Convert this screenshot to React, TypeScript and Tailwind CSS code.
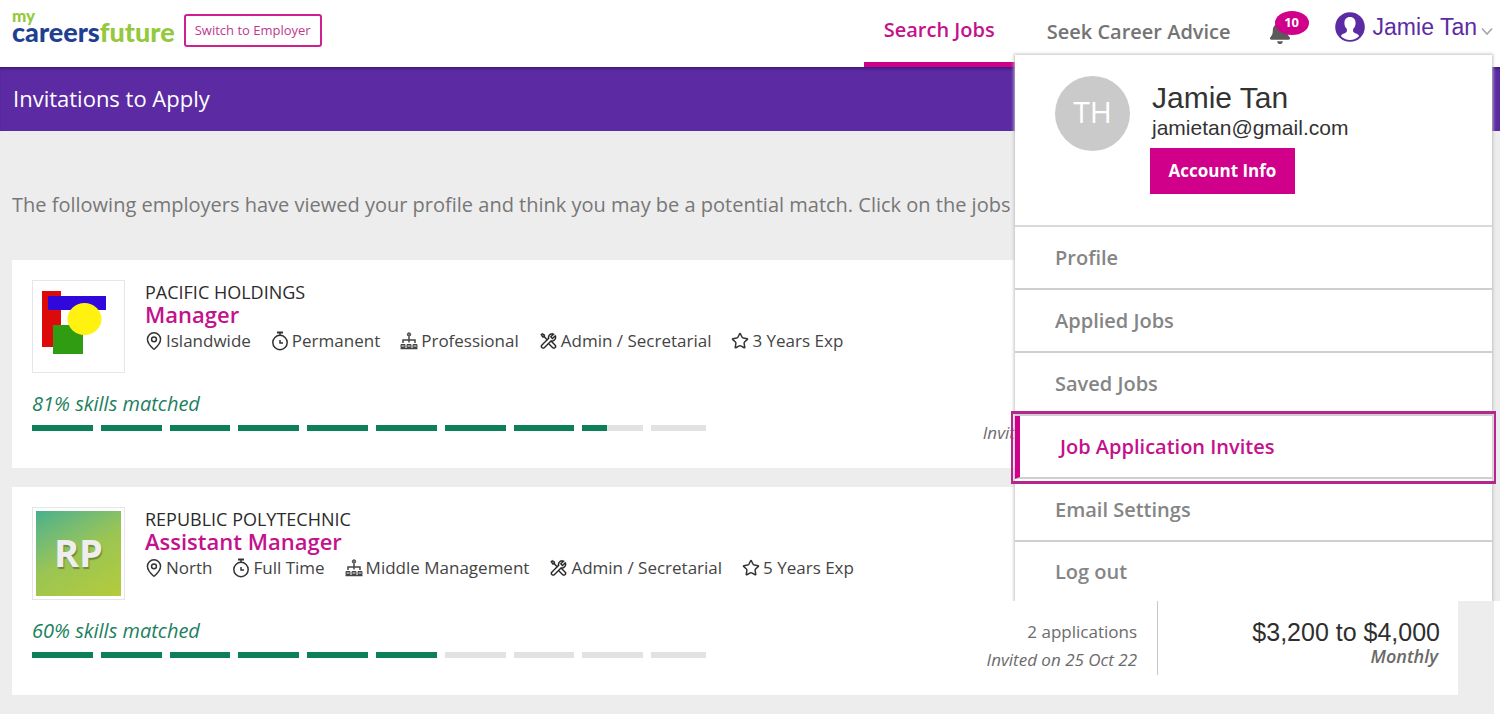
import React from 'react';
import { MapPin, Star } from 'lucide-react';
import { FaBell } from 'react-icons/fa';
import { LiaToolsSolid } from 'react-icons/lia';

interface Job {
  company: string;
  title: string;
  location: string;
  type: string;
  level: string;
  category: string;
  experience: string;
  match: number;
  // how far each of the ten segments is filled
  segments: number[];
  applications: string;
  invited: string;
  salary: string;
  logo: React.ReactNode;
}

const ShapesLogo = () => (
  <svg viewBox="0 0 84 84" className="h-[84px] w-[84px]" aria-hidden="true">
    <rect x="5" y="6" width="19" height="56" fill="#dc0a0a" />
    <rect x="11" y="11" width="58" height="14" fill="#3108dc" />
    <rect x="16" y="40" width="30" height="29" fill="#309c12" />
    <ellipse cx="47.500" cy="34" rx="17" ry="16" fill="#fff110" />
  </svg>
);

const PolyLogo = () => (
  <div className="flex h-[85px] w-[85px] items-center justify-center bg-linear-150 from-[#45b08c] via-[#9ac552] via-50% to-[#b4cb3a] pb-1">
    <span className="text-[38px] font-bold leading-none text-[#eeeeee] [text-shadow:1px_2px_1px_#6f8a3c]">RP</span>
  </div>
);

const StopwatchIcon = () => (
  <svg viewBox="0 0 18 20" className="h-5 w-[18px]" fill="none" stroke="#333" strokeWidth="1.500" aria-hidden="true">
    <circle cx="9" cy="11.500" r="7.200" />
    <path d="M6 1.500h6" strokeWidth="2" />
    <path d="M9 1.500v3M9 9v3h3" />
  </svg>
);

const SitemapIcon = () => (
  <svg viewBox="0 0 18 18" className="h-[18px] w-[18px]" fill="none" stroke="#444" aria-hidden="true">
    <circle cx="9" cy="2.500" r="1.700" fill="#777" />
    <path d="M9 4.500v6M3 11V8h12v3" strokeWidth="1.500" />
    <path d="M1 12.500h4v3H1zM7 12.500h4v3H7zM13 12.500h4v3h-4z" fill="#999" />
    <path d="M.5 16.500h17" strokeWidth="1.500" />
  </svg>
);

const UserIcon = () => (
  <svg viewBox="0 0 30 30" className="h-[30px] w-[30px]" aria-hidden="true">
    <circle cx="15" cy="15" r="14.800" fill="#5c2ba4" />
    <path
      d="M15 5c-3.600 0-5.600 2.400-5.600 6 0 2.600.9 4.600 2.500 6v2c0 1.500-1.400 1.900-3.600 2.800-1.500.6-2 1.400-2.300 2.500C8.300 26.500 11.500 28 15 28s6.700-1.500 9-3.700c-.3-1.100-.8-1.900-2.300-2.500-2.200-.9-3.600-1.300-3.600-2.800v-2c1.600-1.400 2.500-3.400 2.500-6 0-3.600-2-6-5.600-6z"
      fill="#fff"
    />
  </svg>
);

const Caret = () => (
  <svg viewBox="0 0 12 9" className="mt-2 h-[9px] w-3" fill="none" stroke="#a6a6a6" strokeWidth="1.600" aria-hidden="true">
    <path d="M1 1.500l5 5.500 5-5.500" />
  </svg>
);

const jobs: Job[] = [
  {
    company: 'PACIFIC HOLDINGS',
    title: 'Manager',
    location: 'Islandwide',
    type: 'Permanent',
    level: 'Professional',
    category: 'Admin / Secretarial',
    experience: '3 Years Exp',
    match: 81,
    segments: [100, 100, 100, 100, 100, 100, 100, 100, 40, 0],
    applications: '2 applications',
    invited: 'Invited on 26 Nov 22',
    salary: '$3,200 to $4,000',
    logo: <ShapesLogo />,
  },
  {
    company: 'REPUBLIC POLYTECHNIC',
    title: 'Assistant Manager',
    location: 'North',
    type: 'Full Time',
    level: 'Middle Management',
    category: 'Admin / Secretarial',
    experience: '5 Years Exp',
    match: 60,
    segments: [100, 100, 100, 100, 100, 100, 0, 0, 0, 0],
    applications: '2 applications',
    invited: 'Invited on 25 Oct 22',
    salary: '$3,200 to $4,000',
    logo: <PolyLogo />,
  },
];

const menuItems = ['Profile', 'Applied Jobs', 'Saved Jobs', 'Job Application Invites', 'Email Settings', 'Log out'];

const Meta: React.FC<{ icon: React.ReactNode; label: string }> = ({ icon, label }) => (
  <li className="flex items-center gap-[3px]">
    {icon}
    <span>{label}</span>
  </li>
);

const JobCard: React.FC<{ job: Job }> = ({ job }) => (
  <article className="flex h-[208px] justify-between bg-white pl-5 pr-[18px] pt-5">
    <div>
      <div className="flex gap-5">
        <div className="flex h-[93px] w-[93px] items-center justify-center border border-[#e6e6e6]">{job.logo}</div>
        <div>
          <p className="text-[18px] leading-6 text-[#2b2b2b]">{job.company}</p>
          <h2 className="text-[22px] font-semibold leading-5 text-[#c4118c]">
            <a href="#job">{job.title}</a>
          </h2>
          <ul className="mt-[5px] flex gap-5 text-[17px] leading-6 text-[#444]">
            <Meta
              icon={<MapPin viewBox="3 1 18 22" className="h-[18px] w-[18px] text-[#333]" strokeWidth={1.8} />}
              label={job.location}
            />
            <Meta icon={<StopwatchIcon />} label={job.type} />
            <Meta icon={<SitemapIcon />} label={job.level} />
            <Meta icon={<LiaToolsSolid className="h-5 w-[19px] stroke-[#222] stroke-[0.5] text-[#222]" />} label={job.category} />
            <Meta icon={<Star className="h-[18px] w-[18px] text-[#333]" strokeWidth={2} />} label={job.experience} />
          </ul>
        </div>
      </div>
      <p className="mt-[18px] text-[20px] italic leading-[26px] text-[#1d7f60]">{job.match}% skills matched</p>
      <div className="mt-2 w-[674px] overflow-hidden">
        <div className="flex w-[680px] gap-2">
          {job.segments.map((fill, i) => (
            <div key={i} className="h-[6px] flex-1 bg-[#e2e2e2]">
              <div className="h-full bg-[#0d8058]" style={{ width: `${fill}%` }} />
            </div>
          ))}
        </div>
      </div>
    </div>
    <div className="flex items-end pb-5 text-right">
      <div className="flex h-[168px] flex-col justify-end border-r border-[#c8c8c8] pb-px pr-5 text-[#6b6b6b]">
        <p className="text-[17px] leading-7">{job.applications}</p>
        <p className="text-[17px] italic leading-7">{job.invited}</p>
      </div>
      <div className="w-[282px] pb-[7px]">
        <p className="font-['Liberation_Sans',sans-serif] text-[25px] leading-6 text-[#2e2e2e]">{job.salary}</p>
        <p className="pr-[2px] text-[18px] font-semibold italic leading-6 text-[#6a6a6a]">Monthly</p>
      </div>
    </div>
  </article>
);

const AccountMenu = () => (
  <div className="absolute right-2 top-[55px] z-10 h-[546px] w-[477px] bg-white shadow-[0_0_3px_1px_#c0c0c0] [clip-path:inset(-4px_-4px_0_-4px)]">
    <div className="flex h-[172px] gap-5 border-b-2 border-[#dadada] pl-10 pt-[21px]">
      <div className="flex h-[75px] w-[75px] items-center justify-center rounded-full bg-[#cacaca] pb-1 text-[30px] text-white">
        TH
      </div>
      <div>
        <p className="mt-1 pl-[2px] font-['Liberation_Sans',sans-serif] text-[30px] leading-9 text-[#333]">Jamie Tan</p>
        <p className="pl-[2px] font-['Liberation_Sans',sans-serif] text-[21px] leading-6 text-[#333]">jamietan@gmail.com</p>
        <button className="mt-2 h-[46px] w-[145px] bg-[#d0008a] text-[17px] font-bold text-white">Account Info</button>
      </div>
    </div>
    <nav>
      {menuItems.map((item) =>
        item === 'Job Application Invites' ? (
          <a
            key={item}
            href="#invites"
            className="flex h-[63px] items-center border-b-2 border-l-[5px] border-b-[#cfcfcf] border-l-[#d0008a] pl-10 text-[20px] font-semibold text-[#c4118c] outline-3 outline-offset-2 outline-[#b5278f]"
          >
            {item}
          </a>
        ) : (
          <a
            key={item}
            href="#menu"
            className="flex h-[63px] items-center border-b-2 border-[#cfcfcf] pl-10 text-[20px] font-semibold text-[#858585] last:h-[60px] last:border-b-0"
          >
            {item}
          </a>
        )
      )}
    </nav>
  </div>
);

export default function App() {
  return (
    <div className="relative min-h-screen overflow-hidden bg-[#ededed] font-['Open_Sans','Noto_Sans',sans-serif]">
      <header className="flex h-[67px] bg-white pl-3 pr-[7px]">
        <a href="#home" className="mt-[10px] h-9 font-['Lato',sans-serif] font-black">
          <span className="block text-[17px] leading-[11px] text-[#95c93d]">my</span>
          <span className="block text-[27px] leading-[21px] text-[#1e4091]">
            careers<span className="text-[#95c93d]">future</span>
          </span>
        </a>
        <button className="ml-[9px] mt-[14px] h-[33px] w-[138px] rounded-[3px] border-2 border-[#d0208f] text-[13px] text-[#c0388f]">
          Switch to Employer
        </button>
        <nav className="ml-auto flex text-[20px] font-semibold">
          <a href="#search" className="flex w-[151px] items-center justify-center border-b-[5px] border-[#d0008a] pb-[2px] text-[#c4118c]">
            Search Jobs
          </a>
          <a href="#advice" className="ml-8 flex items-center pb-1 text-[#747474]">
            Seek Career Advice
          </a>
        </nav>
        <button aria-label="Notifications" className="relative ml-[38px] mt-5 h-6 w-6">
          <FaBell className="h-[23px] w-[22px] text-[#5a5a5a]" />
          <span className="absolute -top-[9px] left-[6px] flex h-6 w-[34px] items-center justify-center rounded-[50%] bg-[#d0008a] text-[13px] font-bold text-white">
            10
          </span>
        </button>
        <button className="ml-[42px] flex h-[54px] items-center text-[#5c2ba4]">
          <UserIcon />
          <span className="ml-2 mr-1 font-['Liberation_Sans',sans-serif] text-[23px]">Jamie Tan</span>
          <Caret />
        </button>
      </header>
      <div className="flex h-16 items-center bg-[#5c2ba4] pb-[2px] pl-[13px] shadow-[inset_0_3px_3px_-1px_#3f1b7c]">
        <h1 className="text-[22px] text-white">Invitations to Apply</h1>
      </div>
      <main className="pl-3 pr-[42px]">
        <p className="overflow-hidden whitespace-nowrap pb-10 pt-[59px] text-[20px] leading-[30px] text-[#777]">
          The following employers have viewed your profile and think you may be a potential match. Click on the jobs below to apply.
        </p>
        <div className="flex flex-col gap-[19px]">
          {jobs.map((job) => (
            <JobCard key={job.company} job={job} />
          ))}
        </div>
      </main>
      <div className="absolute bottom-0 right-0 top-[601px] w-[6px] bg-white" />
      <AccountMenu />
    </div>
  );
}
